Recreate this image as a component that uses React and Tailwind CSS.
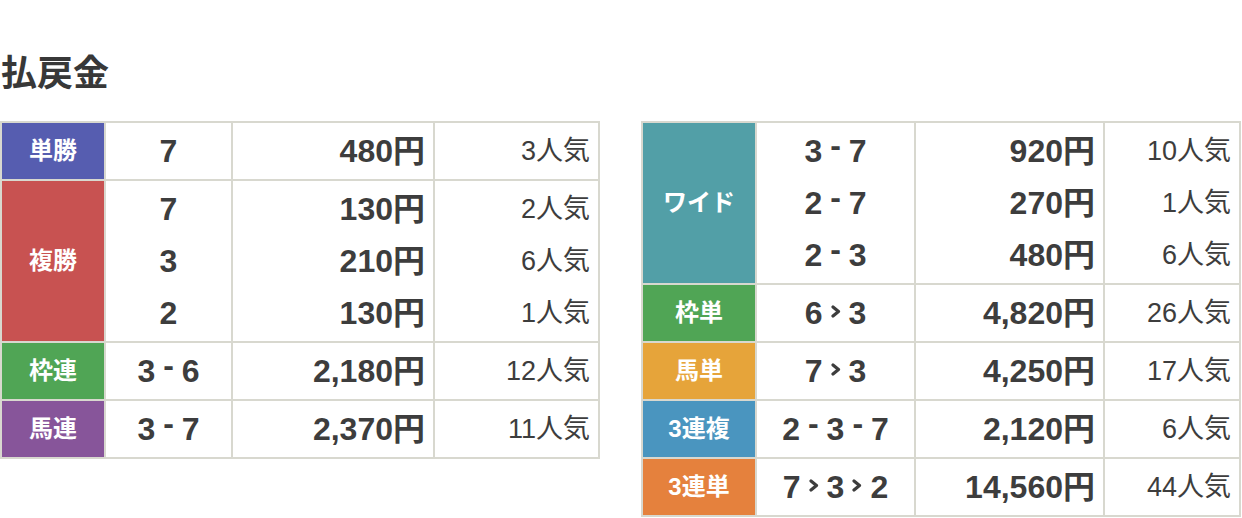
const FONT = { fontFamily: '"Liberation Sans", "Noto Sans CJK JP", sans-serif' };

const left = [
  { label: "単勝", color: "bg-[#565db0]", nums: [["7"]], pay: ["480円"], pop: ["3人気"] },
  {
    label: "複勝",
    color: "bg-[#c85251]",
    nums: [["7"], ["3"], ["2"]],
    pay: ["130円", "210円", "130円"],
    pop: ["2人気", "6人気", "1人気"],
  },
  { label: "枠連", color: "bg-[#50a555]", nums: [["3", "-", "6"]], pay: ["2,180円"], pop: ["12人気"] },
  { label: "馬連", color: "bg-[#87559a]", nums: [["3", "-", "7"]], pay: ["2,370円"], pop: ["11人気"] },
];

const right = [
  {
    label: "ワイド",
    color: "bg-[#529fa7]",
    nums: [["3", "-", "7"], ["2", "-", "7"], ["2", "-", "3"]],
    pay: ["920円", "270円", "480円"],
    pop: ["10人気", "1人気", "6人気"],
  },
  { label: "枠単", color: "bg-[#50a555]", nums: [["6", ">", "3"]], pay: ["4,820円"], pop: ["26人気"] },
  { label: "馬単", color: "bg-[#e6a43a]", nums: [["7", ">", "3"]], pay: ["4,250円"], pop: ["17人気"] },
  { label: "3連複", color: "bg-[#4a95bf]", nums: [["2", "-", "3", "-", "7"]], pay: ["2,120円"], pop: ["6人気"] },
  { label: "3連単", color: "bg-[#e5813d]", nums: [["7", ">", "3", ">", "2"]], pay: ["14,560円"], pop: ["44人気"] },
];

function Sep({ kind }) {
  if (kind === "-") {
    return <span className="mx-[8px] align-[6px] leading-[0]">-</span>;
  }
  return (
    <svg width="10" height="13" viewBox="0 0 10 13" className="mx-[8px] inline-block align-[6px]">
      <polyline points="2,2 7.5,6.5 2,11" fill="none" stroke="currentColor" strokeWidth="3.2" strokeLinejoin="round" strokeLinecap="round" />
    </svg>
  );
}

function Combo({ parts }) {
  return (
    <div className="h-[52px] leading-[52px]">
      {parts.map((p, i) =>
        p === "-" || p === ">" ? <Sep key={i} kind={p} /> : <span key={i}>{p}</span>
      )}
    </div>
  );
}

function PayTable({ rows, widths }) {
  const cell = "border-2 border-[#d8d8cf] py-[2px] align-middle";
  return (
    <table className="table-fixed border-collapse w-[600px] text-[#3d3d3d]" style={FONT}>
      <colgroup>
        {widths.map((w, i) => (
          <col key={i} style={{ width: w }} />
        ))}
      </colgroup>
      <tbody>
        {rows.map((r) => (
          <tr key={r.label}>
            <th className={`${cell} ${r.color} text-white text-[24px] font-bold text-center`}>{r.label}</th>
            <td className={`${cell} text-center text-[32px] font-bold`}>
              {r.nums.map((n, i) => (
                <Combo key={i} parts={n} />
              ))}
            </td>
            <td className={`${cell} text-right pr-2 text-[32px] font-bold`}>
              {r.pay.map((p, i) => (
                <div key={i} className="h-[52px] leading-[52px]">{p}</div>
              ))}
            </td>
            <td className={`${cell} text-right pr-2 text-[27px]`}>
              {r.pop.map((p, i) => (
                <div key={i} className="h-[52px] leading-[52px]">{p}</div>
              ))}
            </td>
          </tr>
        ))}
      </tbody>
    </table>
  );
}

export default function App() {
  return (
    <div className="bg-white w-[1242px] h-[518px] overflow-hidden" style={FONT}>
      <h2 className="pt-[54px] pl-[1px] text-[36px] leading-[40px] font-bold text-[#383838]">払戻金</h2>
      <div className="mt-[27px] flex items-start gap-[41px]">
        <PayTable rows={left} widths={[104, 127, 202, 165]} />
        <PayTable rows={right} widths={[114, 159, 189, 136]} />
      </div>
    </div>
  );
}
